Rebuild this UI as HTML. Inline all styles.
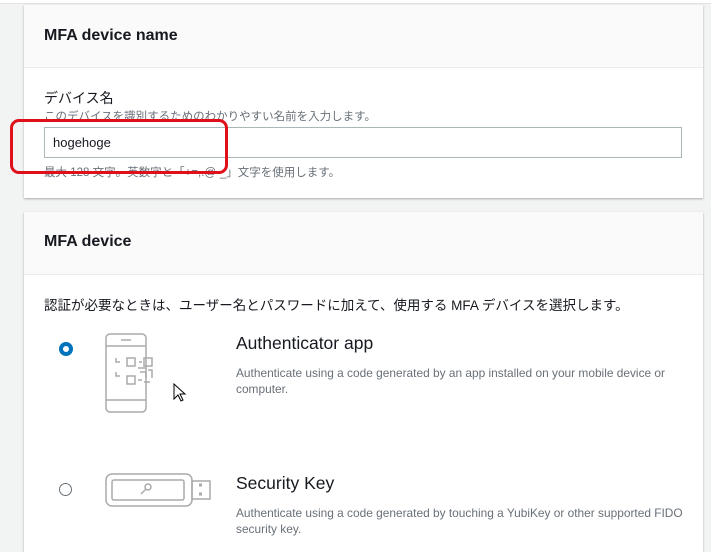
<!DOCTYPE html>
<html><head><meta charset="utf-8"><style>
body{margin:0;width:711px;height:547px;overflow:hidden;background:#f2f3f3;font-family:"Liberation Sans","Noto Sans CJK JP",sans-serif;position:relative}
.p{position:absolute;left:24px;width:679px;background:#fff;box-shadow:0 1px 2px rgba(0,0,0,.3);}
.h{background:#fafafa;border-bottom:1px solid #eaeded;font-weight:bold;font-size:16px;color:#16191f;padding-left:20px;box-sizing:border-box}
.a{position:absolute;white-space:nowrap}
</style></head><body>
<div style="position:absolute;left:0;top:0;width:711px;height:3px;background:#fff;border-bottom:1px solid #e3e3e3"></div>
<div class="p" style="top:5px;height:193px">
 <div class="h" style="height:63px;line-height:62px">MFA device name</div>
 <div class="a" style="left:20px;top:83px;font-size:14px;color:#16191f">デバイス名</div>
 <div class="a" style="left:20px;top:103px;font-size:11.5px;color:#687078">このデバイスを識別するためのわかりやすい名前を入力します。</div>
 <div class="a" style="left:20px;top:122px;width:638px;height:31px;border:1px solid #aab7b8;box-sizing:border-box;font-size:13px;line-height:30px;padding-left:8px;color:#16191f">hogehoge</div>
 <div class="a" style="left:20px;top:159px;font-size:11.5px;color:#687078">最大 128 文字。英数字と「+=,.@-_」文字を使用します。</div>
</div>
<div class="a" style="left:10px;top:119px;width:218px;height:55px;border:3px solid #e0101a;border-radius:9px;box-sizing:border-box"></div>
<div class="p" style="top:212px;height:340px">
 <div class="h" style="height:63px;line-height:60px">MFA device</div>
 <div class="a" style="left:20px;top:82px;font-size:13.5px;color:#16191f">認証が必要なときは、ユーザー名とパスワードに加えて、使用する MFA デバイスを選択します。</div>
 <div class="a" style="left:35px;top:130px;width:14px;height:14px;border-radius:50%;border:4px solid #0073bb;box-sizing:border-box"></div>
 <svg class="a" style="left:80px;top:120px" width="60" height="82" fill="none" stroke="#aaa" stroke-width="1.5"><rect x="2" y="2" width="40" height="78" rx="4"/><line x1="2" y1="14" x2="42" y2="14"/><line x1="2" y1="68" x2="42" y2="68"/><line x1="17" y1="8" x2="27" y2="8"/><rect x="23" y="26" width="8" height="8"/><rect x="40" y="26" width="8" height="8"/><rect x="23" y="44" width="8" height="8"/><path d="M35 30h3M34 36h8M36 40h6v6M44 38h4v8M34 48h4M40 50h6M12 26v4h4M12 40v4h4"/></svg>
 <div class="a" style="left:212px;top:121px;font-size:17.5px;color:#16191f">Authenticator app</div>
 <div class="a" style="left:212px;top:153px;font-size:11.9px;color:#687078;line-height:16px">Authenticate using a code generated by an app installed on your mobile device or<br>computer.</div>
 <svg class="a" style="left:80px;top:260px" width="110" height="40" fill="none" stroke="#aaa" stroke-width="1.5"><rect x="2" y="2" width="86" height="32" rx="6"/><rect x="8" y="8" width="72" height="20" rx="2"/><rect x="88" y="9" width="18" height="18"/><circle cx="44" cy="15" r="3"/><path d="M42 17l-5 5"/><path d="M95 13h3M95 22h3" stroke-width="3"/></svg>
 <div class="a" style="left:35px;top:271px;width:13px;height:13px;border-radius:50%;border:1px solid #687078;box-sizing:border-box"></div>
 <div class="a" style="left:212px;top:261px;font-size:17.5px;color:#16191f">Security Key</div>
 <div class="a" style="left:212px;top:293px;font-size:11.9px;color:#687078;line-height:16px">Authenticate using a code generated by touching a YubiKey or other supported FIDO<br>security key.</div>
</div>
<svg class="a" style="left:173px;top:383px" width="14" height="20"><path d="M1 1v15l4-4 3 6 2-1-3-6h5z" fill="#fff" stroke="#000"/></svg>
</body></html>
